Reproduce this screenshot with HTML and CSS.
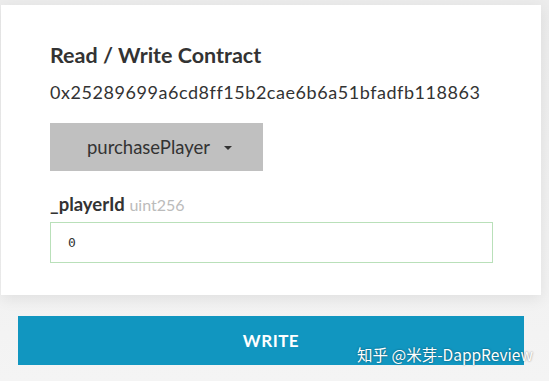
FILE: index.html
```html
<!DOCTYPE html>
<html>
<head>
<meta charset="utf-8">
<link rel="stylesheet" href="styles.css">
</head>
<body>
<div class="page">
  <div class="card">
    <h2 class="title">Read / Write Contract</h2>
    <div class="address">0x25289699a6cd8ff15b2cae6b6a51bfadfb118863</div>
    <div class="dropdown">
      <span>purchasePlayer</span>
      <span class="caret"></span>
    </div>
    <div class="label"><b>_playerId</b> <span class="type">uint256</span></div>
    <div class="input">0</div>
  </div>
  <div class="write">WRITE</div>
  <div class="watermark">知乎 @米芽-DappReview</div>
</div>
</body>
</html>
```
FILE: styles.css
```css
html, body {
  margin: 0;
  padding: 0;
  background: #f1f1f1;
  font-family: Lato, "Noto Sans", sans-serif;
}
.page {
  position: relative;
  width: 549px;
  height: 381px;
  padding: 5px 0 0 1px;
  box-sizing: border-box;
  background: linear-gradient(to bottom, #ececec 0%, #f4f4f4 100%);
}
.card {
  width: 540px;
  height: 290px;
  box-sizing: border-box;
  background: #fff;
  padding: 37px 0 0 49px;
  box-shadow: 0 4px 14px rgba(0,0,0,0.08);
}
.title {
  margin: 0;
  font-size: 21.5px;
  font-weight: 700;
  color: #333;
  line-height: 26px;
}
.address {
  margin-top: 12px;
  font-size: 18px;
  letter-spacing: 0.55px;
  color: #333;
  line-height: 24px;
}
.dropdown {
  margin-top: 19px;
  width: 213px;
  height: 48px;
  background: #c0c0c0;
  display: flex;
  align-items: center;
  justify-content: center;
  gap: 14px;
  font-size: 18.5px;
  color: #333;
  box-sizing: border-box;
  padding-left: 6px;
}
.caret {
  width: 0;
  height: 0;
  border-left: 4px solid transparent;
  border-right: 4px solid transparent;
  border-top: 4px solid #333;
  margin-top: 2px;
}
.label {
  margin-top: 22px;
  font-size: 18.5px;
  color: #333;
  line-height: 22px;
}
.label b { font-weight: 700; }
.type {
  color: #bbb;
  font-size: 16px;
}
.input {
  margin-top: 6px;
  width: 443px;
  height: 41px;
  box-sizing: border-box;
  border: 1px solid #b9e0b9;
  padding-left: 17px;
  display: flex;
  align-items: center;
  font-family: "DejaVu Sans Mono", monospace;
  font-size: 13px;
  color: #333;
}
.write {
  margin: 21px 0 0 17px;
  width: 506px;
  height: 49px;
  background: #1196c0;
  color: #fff;
  font-weight: 700;
  font-size: 17px;
  letter-spacing: 0.5px;
  display: flex;
  align-items: center;
  justify-content: center;
}
.watermark {
  position: absolute;
  left: 357px;
  top: 343px;
  font-family: "Noto Sans CJK SC", "Noto Sans", sans-serif;
  font-size: 15.5px;
  color: #fff;
  text-shadow: 0 0 2px rgba(0,0,0,0.5);
  white-space: nowrap;
}
```
